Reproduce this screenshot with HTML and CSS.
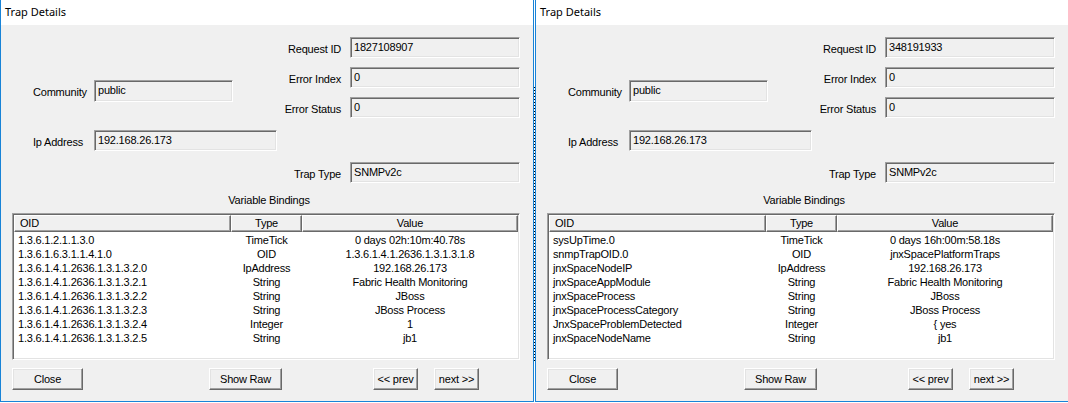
FILE: index.html
```html
<!DOCTYPE html>
<html>
<head>
<meta charset="utf-8">
<link rel="stylesheet" href="styles.css">
</head>
<body>
<div class="screen">
  <div class="window w1">
    <div class="titlebar">Trap Details</div>
    <div class="body">
      <div class="top">
        <div class="leftcol">
          <span class="lbl">Community</span><div class="field f-comm">public</div>
          <span class="lbl ip">Ip Address</span><div class="field f-ip ip">192.168.26.173</div>
        </div>
        <div class="rightcol">
          <span class="lbl">Request ID</span><div class="field">1827108907</div>
          <span class="lbl">Error Index</span><div class="field">0</div>
          <span class="lbl">Error Status</span><div class="field">0</div>
          <span class="lbl trap">Trap Type</span><div class="field trap">SNMPv2c</div>
        </div>
      </div>
      <div class="vb-title">Variable Bindings</div>
      <div class="table">
        <div class="thead"><div class="th c-oid">OID</div><div class="th c-type">Type</div><div class="th c-val">Value</div></div>
        <div class="tbody">
          <div class="tr"><div class="c-oid">1.3.6.1.2.1.1.3.0</div><div class="c-type">TimeTick</div><div class="c-val">0 days 02h:10m:40.78s</div></div>
          <div class="tr"><div class="c-oid">1.3.6.1.6.3.1.1.4.1.0</div><div class="c-type">OID</div><div class="c-val">1.3.6.1.4.1.2636.1.3.1.3.1.8</div></div>
          <div class="tr"><div class="c-oid">1.3.6.1.4.1.2636.1.3.1.3.2.0</div><div class="c-type">IpAddress</div><div class="c-val">192.168.26.173</div></div>
          <div class="tr"><div class="c-oid">1.3.6.1.4.1.2636.1.3.1.3.2.1</div><div class="c-type">String</div><div class="c-val">Fabric Health Monitoring</div></div>
          <div class="tr"><div class="c-oid">1.3.6.1.4.1.2636.1.3.1.3.2.2</div><div class="c-type">String</div><div class="c-val">JBoss</div></div>
          <div class="tr"><div class="c-oid">1.3.6.1.4.1.2636.1.3.1.3.2.3</div><div class="c-type">String</div><div class="c-val">JBoss Process</div></div>
          <div class="tr"><div class="c-oid">1.3.6.1.4.1.2636.1.3.1.3.2.4</div><div class="c-type">Integer</div><div class="c-val">1</div></div>
          <div class="tr"><div class="c-oid">1.3.6.1.4.1.2636.1.3.1.3.2.5</div><div class="c-type">String</div><div class="c-val">jb1</div></div>
        </div>
      </div>
      <div class="buttons">
        <button class="btn b-close">Close</button>
        <button class="btn b-raw">Show Raw</button>
        <button class="btn b-prev">&lt;&lt; prev</button>
        <button class="btn b-next">next &gt;&gt;</button>
      </div>
    </div>
  </div>
  <div class="gap"><div class="dots"></div></div>
  <div class="window w2">
    <div class="titlebar">Trap Details</div>
    <div class="body">
      <div class="top">
        <div class="leftcol">
          <span class="lbl">Community</span><div class="field f-comm">public</div>
          <span class="lbl ip">Ip Address</span><div class="field f-ip ip">192.168.26.173</div>
        </div>
        <div class="rightcol">
          <span class="lbl">Request ID</span><div class="field">348191933</div>
          <span class="lbl">Error Index</span><div class="field">0</div>
          <span class="lbl">Error Status</span><div class="field">0</div>
          <span class="lbl trap">Trap Type</span><div class="field trap">SNMPv2c</div>
        </div>
      </div>
      <div class="vb-title">Variable Bindings</div>
      <div class="table">
        <div class="thead"><div class="th c-oid">OID</div><div class="th c-type">Type</div><div class="th c-val">Value</div></div>
        <div class="tbody">
          <div class="tr"><div class="c-oid">sysUpTime.0</div><div class="c-type">TimeTick</div><div class="c-val">0 days 16h:00m:58.18s</div></div>
          <div class="tr"><div class="c-oid">snmpTrapOID.0</div><div class="c-type">OID</div><div class="c-val">jnxSpacePlatformTraps</div></div>
          <div class="tr"><div class="c-oid">jnxSpaceNodeIP</div><div class="c-type">IpAddress</div><div class="c-val">192.168.26.173</div></div>
          <div class="tr"><div class="c-oid">jnxSpaceAppModule</div><div class="c-type">String</div><div class="c-val">Fabric Health Monitoring</div></div>
          <div class="tr"><div class="c-oid">jnxSpaceProcess</div><div class="c-type">String</div><div class="c-val">JBoss</div></div>
          <div class="tr"><div class="c-oid">jnxSpaceProcessCategory</div><div class="c-type">String</div><div class="c-val">JBoss Process</div></div>
          <div class="tr"><div class="c-oid">JnxSpaceProblemDetected</div><div class="c-type">Integer</div><div class="c-val">{ yes</div></div>
          <div class="tr"><div class="c-oid">jnxSpaceNodeName</div><div class="c-type">String</div><div class="c-val">jb1</div></div>
        </div>
      </div>
      <div class="buttons">
        <button class="btn b-close">Close</button>
        <button class="btn b-raw">Show Raw</button>
        <button class="btn b-prev">&lt;&lt; prev</button>
        <button class="btn b-next">next &gt;&gt;</button>
      </div>
    </div>
  </div>
</div>
</body>
</html>
```
FILE: styles.css
```css
* { box-sizing: border-box; }
html, body { margin: 0; padding: 0; background: #ffffff; }
body {
  width: 1068px;
  height: 403px;
  overflow: hidden;
  font-family: "Liberation Sans", Arial, sans-serif;
  font-size: 11px;
  letter-spacing: -0.2px;
  color: #000;
}
.screen { display: flex; align-items: flex-start; }
.window {
  height: 402px;
  display: flex;
  flex-direction: column;
  border-left: 1px solid #1883d7;
  border-bottom: 1px solid #1883d7;
  background: #fff;
}
.w1 { width: 534px; border-right: 1px solid #1883d7; }
.w2 { width: 533px; }
.gap { width: 1px; height: 402px; display: flex; flex-direction: column; }
.dots {
  margin-top: 87px;
  height: 276px;
  background: repeating-linear-gradient(to bottom, #000 0 1px, transparent 1px 3px);
}
.titlebar {
  height: 25px;
  padding: 4px 0 0 4px;
  font-family: "Noto Sans", "Open Sans", sans-serif;
  font-size: 11px;
  letter-spacing: 0;
  line-height: 16px;
  color: #000;
  background: #fff;
}
.body {
  flex: 1;
  background: #f0f0f0;
  padding: 0 13px 0 11px;
  display: flex;
  flex-direction: column;
}
.top { display: flex; height: 158px; }
.leftcol {
  margin-left: 21px;
  padding-top: 55px;
  display: grid;
  grid-template-columns: 61px auto;
  grid-template-rows: 22px 21px;
  row-gap: 28px;
  align-content: start;
  justify-items: start;
}
.rightcol {
  margin-left: auto;
  padding-top: 12px;
  display: grid;
  grid-template-columns: auto 170px;
  column-gap: 9px;
  row-gap: 9px;
  align-content: start;
  justify-items: end;
}
.lbl {
  height: 21px;
  display: flex;
  align-items: center;
  padding-top: 2px;
  white-space: nowrap;
}
.leftcol .lbl { height: 100%; }
.trap { margin-top: 35px; }
.field {
  height: 21px;
  width: 170px;
  background: #f0f0f0;
  border-top: 1px solid #a0a0a0;
  border-left: 1px solid #a0a0a0;
  border-bottom: 1px solid #ffffff;
  border-right: 1px solid #ffffff;
  box-shadow: inset 1px 1px 0 #696969, inset -1px -1px 0 #e3e3e3;
  padding: 3px 0 0 3px;
  line-height: 13px;
  white-space: nowrap;
}
.leftcol .field { height: 100%; }
.f-comm { width: 139px; }
.f-ip { width: 183px; }
.vb-title {
  margin-top: 10px;
  height: 14px;
  line-height: 14px;
  text-align: center;
  padding-left: 6px;
}
.table {
  margin-top: 6px;
  height: 147px;
  background: #fff;
  border-top: 1px solid #a0a0a0;
  border-left: 1px solid #a0a0a0;
  border-bottom: 1px solid #ffffff;
  border-right: 1px solid #ffffff;
  box-shadow: inset 1px 1px 0 #696969, inset -1px -1px 0 #e3e3e3;
  padding: 1px;
  display: flex;
  flex-direction: column;
}
.thead { display: flex; height: 17px; }
.th {
  height: 17px;
  background: #f0f0f0;
  border-top: 1px solid #ffffff;
  border-left: 1px solid #ffffff;
  border-bottom: 1px solid #696969;
  border-right: 1px solid #696969;
  box-shadow: inset -1px -1px 0 #a0a0a0;
  line-height: 14px;
  white-space: nowrap;
}
.c-oid { width: 217px; padding-left: 4px; text-align: left; }
.th.c-oid { padding-left: 5px; }
.c-type { width: 71px; text-align: center; }
.c-val { width: 216px; text-align: center; }
.tbody { padding-top: 1px; }
.tr { display: flex; height: 14px; line-height: 14px; white-space: nowrap; }
.tr > div { overflow: hidden; }
.buttons { display: flex; margin-top: 8px; height: 22px; }
.btn {
  height: 22px;
  padding: 0;
  margin: 0;
  font-family: "Liberation Sans", Arial, sans-serif;
  font-size: 11px;
  letter-spacing: -0.2px;
  color: #000;
  background: #f0f0f0;
  border-top: 1px solid #ffffff;
  border-left: 1px solid #ffffff;
  border-bottom: 1px solid #696969;
  border-right: 1px solid #696969;
  box-shadow: inset -1px -1px 0 #a0a0a0, inset 1px 1px 0 #e3e3e3;
  text-align: center;
}
.b-close { width: 71px; }
.b-raw { width: 73px; margin-left: 126px; }
.b-prev { width: 45px; margin-left: 91px; }
.b-next { width: 45px; margin-left: 16px; }
```
